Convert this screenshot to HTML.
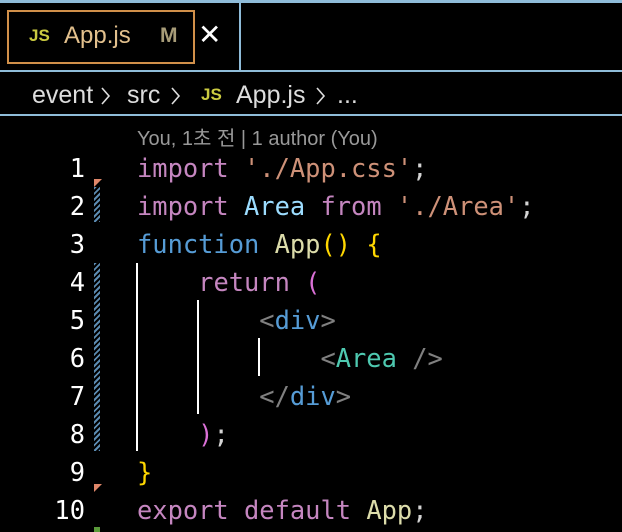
<!DOCTYPE html>
<html><head><meta charset="utf-8"><style>
body{margin:0;width:622px;height:532px;background:#000;overflow:hidden;position:relative;font-family:"Liberation Sans","Noto Sans CJK KR",sans-serif}
.a{position:absolute}
.code{font-family:"DejaVu Sans Mono",monospace;font-size:25.4px;line-height:38px;white-space:pre;color:#d4d4d4}
.k{color:#c586c0}.s{color:#ce9178}.v{color:#9cdcfe}.f{color:#dcdcaa}.b{color:#569cd6}.t{color:#4ec9b0}.g{color:#808080}.y{color:#ffd700}.p{color:#da70d6}
.hatch{background:repeating-linear-gradient(135deg,#5b8ab0 0 2px,#000 2px 4px)}
.tri{width:0;height:0;border-left:8px solid #e0876a;border-bottom:8px solid transparent}
.bc{position:absolute;top:81px;font-size:25px;color:#ddd}
.js{font-size:17px;font-weight:bold;color:#cbcb41}
</style></head><body>
<div class="a" style="left:0;top:0;width:622px;height:3px;background:#8fbcd9"></div>
<div class="a" style="left:239px;top:0;width:2px;height:71px;background:#8fbcd9"></div>
<div class="a" style="left:0;top:70px;width:622px;height:2px;background:#8fbcd9"></div>
<div class="a" style="left:7px;top:10px;width:184px;height:50px;border:2px solid #d1904a"></div>
<div class="a js" style="left:29px;top:26px">JS</div>
<div class="a" style="left:64px;top:22px;font-size:24px;color:#e2c08d">App.js</div>
<div class="a" style="left:160px;top:24px;font-size:21px;font-weight:bold;color:#a79c78">M</div>
<div class="a" style="left:198px;top:18px;font-size:28px;color:#fff">✕</div>
<div class="bc" style="left:32px">event</div>
<svg class="a" style="left:100px;top:86px" width="12" height="20"><path d="M2 2 L9 10 L2 18" stroke="#ddd" stroke-width="1.6" fill="none"/></svg>
<div class="bc" style="left:127px">src</div>
<svg class="a" style="left:170px;top:86px" width="12" height="20"><path d="M2 2 L9 10 L2 18" stroke="#ddd" stroke-width="1.6" fill="none"/></svg>
<div class="a js" style="left:201px;top:85px">JS</div>
<div class="bc" style="left:236px">App.js</div>
<svg class="a" style="left:315px;top:86px" width="12" height="20"><path d="M2 2 L9 10 L2 18" stroke="#ddd" stroke-width="1.6" fill="none"/></svg>
<div class="bc" style="left:337px">...</div>
<div class="a" style="left:0;top:114px;width:622px;height:2px;background:#8fbcd9"></div>
<div class="a" style="left:137px;top:122px;font-size:20px;color:#999">You, 1초 전 | 1 author (You)</div>
<div class="a code" style="left:30px;top:149px;width:55px;text-align:right;color:#fff">1
2
3
4
5
6
7
8
9
10</div>
<div class="a code" style="left:137px;top:149px"><span class="k">import</span> <span class="s">'./App.css'</span>;
<span class="k">import</span> <span class="v">Area</span> <span class="k">from</span> <span class="s">'./Area'</span>;
<span class="b">function</span> <span class="f">App</span><span class="y">()</span> <span class="y">{</span>
    <span class="k">return</span> <span class="p">(</span>
        <span class="g">&lt;</span><span class="b">div</span><span class="g">&gt;</span>
            <span class="g">&lt;</span><span class="t">Area</span> <span class="g">/&gt;</span>
        <span class="g">&lt;/</span><span class="b">div</span><span class="g">&gt;</span>
    <span class="p">)</span>;
<span class="y">}</span>
<span class="k">export</span> <span class="k">default</span> <span class="f">App</span>;</div>
<div class="a" style="left:136px;top:263px;width:2px;height:188px;background:#fff"></div>
<div class="a" style="left:197px;top:300px;width:2px;height:114px;background:#fff"></div>
<div class="a" style="left:258px;top:338px;width:2px;height:38px;background:#fff"></div>
<div class="a tri" style="left:94px;top:179px"></div>
<div class="a hatch" style="left:94px;top:187px;width:6px;height:35px"></div>
<div class="a hatch" style="left:94px;top:263px;width:6px;height:188px"></div>
<div class="a tri" style="left:94px;top:484px"></div>
<div class="a" style="left:94px;top:527px;width:6px;height:5px;background:#5a9a3a"></div>
</body></html>
